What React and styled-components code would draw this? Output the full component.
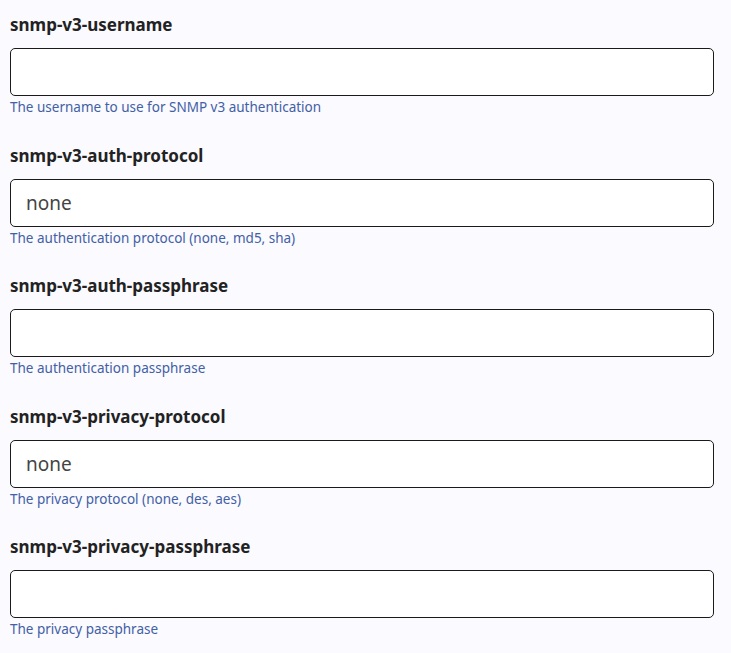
import React from "react";
import styled, { createGlobalStyle } from "styled-components";

const GlobalStyle = createGlobalStyle`
  html, body {
    margin: 0;
    background: #fafaff;
  }
  body {
    font-family: "Noto Sans", "Open Sans", sans-serif;
  }
`;

const Form = styled.div`
  padding: 13px 17px 0 10px;
  display: flex;
  flex-direction: column;
  gap: 26.5px;
`;

const Field = styled.div`
  display: flex;
  flex-direction: column;
`;

const Label = styled.label`
  font-size: 17px;
  font-weight: 700;
  line-height: 24px;
  color: #222;
  margin-bottom: 11px;
`;

const Input = styled.input`
  box-sizing: border-box;
  height: 48px;
  width: 100%;
  border: 1px solid #1a1a1a;
  border-radius: 5px;
  background: #fff;
  padding: 0 15px;
  font-family: inherit;
  font-size: 19px;
  color: #444;
  outline: none;
`;

const Help = styled.div`
  font-size: 13.5px;
  line-height: 20px;
  margin-top: 1px;
  color: #4260a4;
`;

const fields = [
  { name: "snmp-v3-username", value: "", help: "The username to use for SNMP v3 authentication" },
  { name: "snmp-v3-auth-protocol", value: "none", help: "The authentication protocol (none, md5, sha)" },
  { name: "snmp-v3-auth-passphrase", value: "", help: "The authentication passphrase" },
  { name: "snmp-v3-privacy-protocol", value: "none", help: "The privacy protocol (none, des, aes)" },
  { name: "snmp-v3-privacy-passphrase", value: "", help: "The privacy passphrase" },
];

export default function App() {
  return (
    <>
      <GlobalStyle />
      <Form>
        {fields.map((f) => (
          <Field key={f.name}>
            <Label htmlFor={f.name}>{f.name}</Label>
            <Input id={f.name} defaultValue={f.value} />
            <Help>{f.help}</Help>
          </Field>
        ))}
      </Form>
    </>
  );
}
